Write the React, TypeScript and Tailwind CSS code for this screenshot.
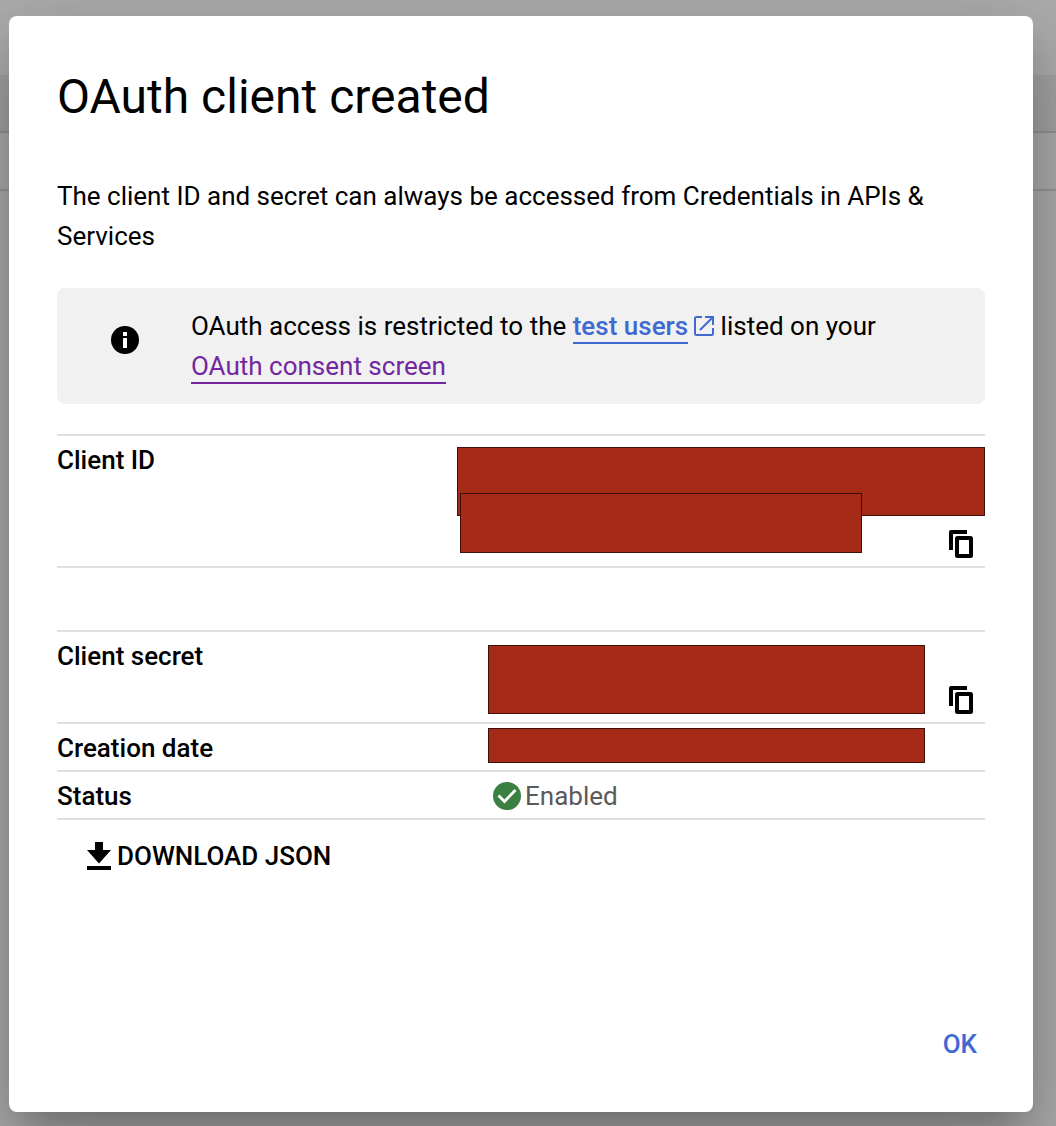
import type { ReactNode } from "react";

function InfoIcon() {
  return (
    <svg className="mt-5 h-7 w-7 shrink-0" viewBox="0 0 28 28" aria-hidden="true">
      <circle cx="14" cy="14" r="14" fill="#000" />
      <path d="M12 6h4v4h-4zM12 12h4v10h-4z" fill="#fff" />
    </svg>
  );
}

function ExternalIcon() {
  return (
    <svg
      className="ml-1.5 inline-block h-5 w-5 align-[-1px]"
      viewBox="0 0 20 20"
      fill="none"
      stroke="#4069d2"
      strokeWidth="2"
      aria-hidden="true"
    >
      <path d="M8 1H2.5Q1 1 1 2.500V17.500Q1 19 2.500 19H17.500Q19 19 19 17.500V12" />
      <path d="M11 1H19V9M18.500 1.500L6 14" />
    </svg>
  );
}

function CopyIcon() {
  return (
    <svg className="h-7 w-6" viewBox="0 0 24 28" fill="none" stroke="#000" strokeWidth="4" aria-hidden="true">
      <path d="M0 20V2Q0 0 2 0H18V4H4V20Z" fill="#000" stroke="none" />
      <rect x="8" y="8" width="14" height="18" rx="0.5" />
    </svg>
  );
}

function CheckIcon() {
  return (
    <svg className="h-7 w-7 shrink-0" viewBox="0 0 28 28" fill="none" aria-hidden="true">
      <circle cx="14" cy="14" r="14" fill="#3b8040" />
      <path d="M5.500 13.500L11.500 19.500L22.500 8" stroke="#fff" strokeWidth="2.800" />
    </svg>
  );
}

function DownloadIcon() {
  return (
    <svg className="h-7 w-6 shrink-0" viewBox="0 0 24 28" aria-hidden="true">
      <path d="M8 0h8v8h8L12 21.500L0 8h8zM0 24h24v4H0z" />
    </svg>
  );
}

function CopyButton({ label }: { label: string }) {
  return (
    <button type="button" aria-label={label} className="mr-3 shrink-0 self-end">
      <CopyIcon />
    </button>
  );
}

function Label({ children }: { children: ReactNode }) {
  return (
    <th scope="row" className="border-b-2 border-[#dedede] pt-1 pb-0.5 text-left align-top font-medium">
      {children}
    </th>
  );
}

const table = "w-full table-fixed border-separate border-spacing-0 border-t-2 border-[#dedede]";

function Columns() {
  return (
    <colgroup>
      <col className="w-[400px]" />
      <col />
    </colgroup>
  );
}

export default function App() {
  return (
    <div className="grid min-h-screen overflow-hidden bg-[#adadad] font-[Roboto,sans-serif] text-[26px] leading-10 text-black">
      <div className="col-start-1 row-start-1" aria-hidden="true">
        <div className="h-[75px]" />
        <div className="h-[58px] border-b-2 border-[#939393] bg-[#a4a4a4]" />
        <div className="h-[58px] border-b-2 border-[#989898]" />
      </div>

      <div
        role="dialog"
        aria-labelledby="dialog-title"
        className="relative col-start-1 row-start-1 mt-4 mr-[23px] mb-3.5 ml-[9px] flex flex-col rounded-lg bg-white p-12 shadow-[0_22px_30px_-14px_rgba(0,0,0,0.2),0_48px_76px_6px_rgba(0,0,0,0.14),0_18px_92px_16px_rgba(0,0,0,0.12)]"
      >
        <h1 id="dialog-title" className="text-5xl leading-[66px]">
          OAuth client created
        </h1>
        <p className="mt-[46px]">
          The client ID and secret can always be accessed from Credentials in APIs &amp; Services
        </p>

        <div className="mt-8 flex gap-[52px] rounded-lg bg-[#f1f1f1] py-[18px] pr-12 pl-[54px]">
          <InfoIcon />
          <p>
            OAuth access is restricted to the{" "}
            <a href="#test-users" className="border-b-2 border-[#4069d2] pb-px font-medium text-[#4069d2]">
              test users
            </a>
            <ExternalIcon /> listed on your{" "}
            <a href="#consent" className="border-b-2 border-[#7326a0] pb-px text-[#7326a0]">
              OAuth consent screen
            </a>
          </p>
        </div>

        <table className={`mt-[30px] ${table}`}>
          <Columns />
          <tbody>
            <tr>
              <Label>Client ID</Label>
              <td className="border-b-2 border-[#dedede] pt-[11px] pb-2 align-top">
                <div className="h-[69px] border border-[#3d1009] bg-[#a52a17]" />
                <div className="relative -mt-[23px] flex h-[65px] items-start justify-between pl-[3px]">
                  <div className="h-[60px] w-[402px] border border-[#3d1009] bg-[#a52a17]" />
                  <CopyButton label="Copy client ID" />
                </div>
              </td>
            </tr>
          </tbody>
        </table>

        <table className={`mt-[62px] ${table}`}>
          <Columns />
          <tbody>
            <tr>
              <Label>Client secret</Label>
              <td className="border-b-2 border-[#dedede] pt-[13px] pb-2 pl-[31px] align-top">
                <div className="flex justify-between">
                  <div className="h-[69px] w-[437px] border border-[#3d1009] bg-[#a52a17]" />
                  <CopyButton label="Copy client secret" />
                </div>
              </td>
            </tr>
            <tr>
              <Label>Creation date</Label>
              <td className="border-b-2 border-[#dedede] pt-1 pb-[7px] pl-[31px] align-top">
                <div className="h-[35px] w-[437px] border border-[#3d1009] bg-[#a52a17]" />
              </td>
            </tr>
            <tr>
              <Label>Status</Label>
              <td className="border-b-2 border-[#dedede] pt-1 pb-0.5 pl-9 align-top text-[#5a5a5a]">
                <div className="flex items-center gap-1">
                  <CheckIcon />
                  Enabled
                </div>
              </td>
            </tr>
          </tbody>
        </table>

        <button type="button" className="mt-4 ml-[30px] flex items-center gap-1.5 self-start font-medium">
          <DownloadIcon />
          DOWNLOAD JSON
        </button>

        <div className="mt-auto flex justify-end pt-12">
          <button type="button" className="px-2 font-medium text-[#4069d2]">
            OK
          </button>
        </div>
      </div>
    </div>
  );
}
